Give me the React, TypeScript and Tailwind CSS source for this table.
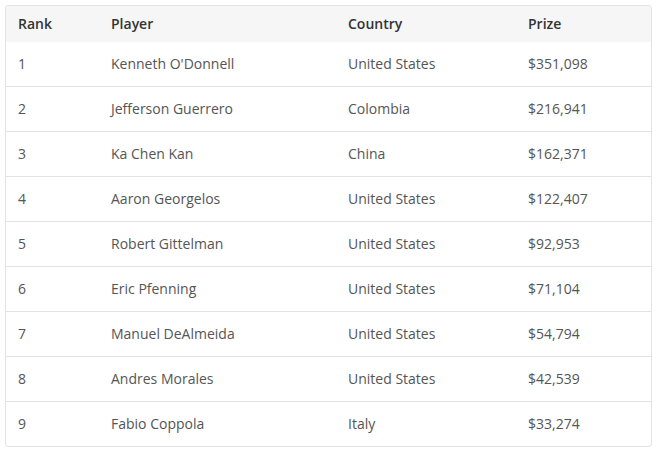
import React from "react";

type Row = {
  rank: number;
  player: string;
  country: string;
  prize: string;
};

const rows: Row[] = [
  { rank: 1, player: "Kenneth O'Donnell", country: "United States", prize: "$351,098" },
  { rank: 2, player: "Jefferson Guerrero", country: "Colombia", prize: "$216,941" },
  { rank: 3, player: "Ka Chen Kan", country: "China", prize: "$162,371" },
  { rank: 4, player: "Aaron Georgelos", country: "United States", prize: "$122,407" },
  { rank: 5, player: "Robert Gittelman", country: "United States", prize: "$92,953" },
  { rank: 6, player: "Eric Pfenning", country: "United States", prize: "$71,104" },
  { rank: 7, player: "Manuel DeAlmeida", country: "United States", prize: "$54,794" },
  { rank: 8, player: "Andres Morales", country: "United States", prize: "$42,539" },
  { rank: 9, player: "Fabio Coppola", country: "Italy", prize: "$33,274" },
];

const cols = "grid grid-cols-[93px_237px_180px_1fr] px-3 pb-[2px]";

export default function App() {
  return (
    <div className="w-[658px] h-[454px] bg-white p-[5px] font-['Open_Sans',sans-serif] text-[14px]">
      <div className="w-[647px] border border-[#e3e3e3] rounded-[3px] overflow-hidden">
        <div className={`${cols} h-[36px] items-center bg-[#f6f6f6] text-[#333] font-semibold`}>
          <div>Rank</div>
          <div>Player</div>
          <div>Country</div>
          <div>Prize</div>
        </div>
        {rows.map((r) => (
          <div
            key={r.rank}
            className={`${cols} h-[45px] items-center border-b border-[#e3e3e3] last:h-[44px] last:border-b-0 text-[#555]`}
          >
            <div>{r.rank}</div>
            <div>{r.player}</div>
            <div>{r.country}</div>
            <div>{r.prize}</div>
          </div>
        ))}
      </div>
    </div>
  );
}
